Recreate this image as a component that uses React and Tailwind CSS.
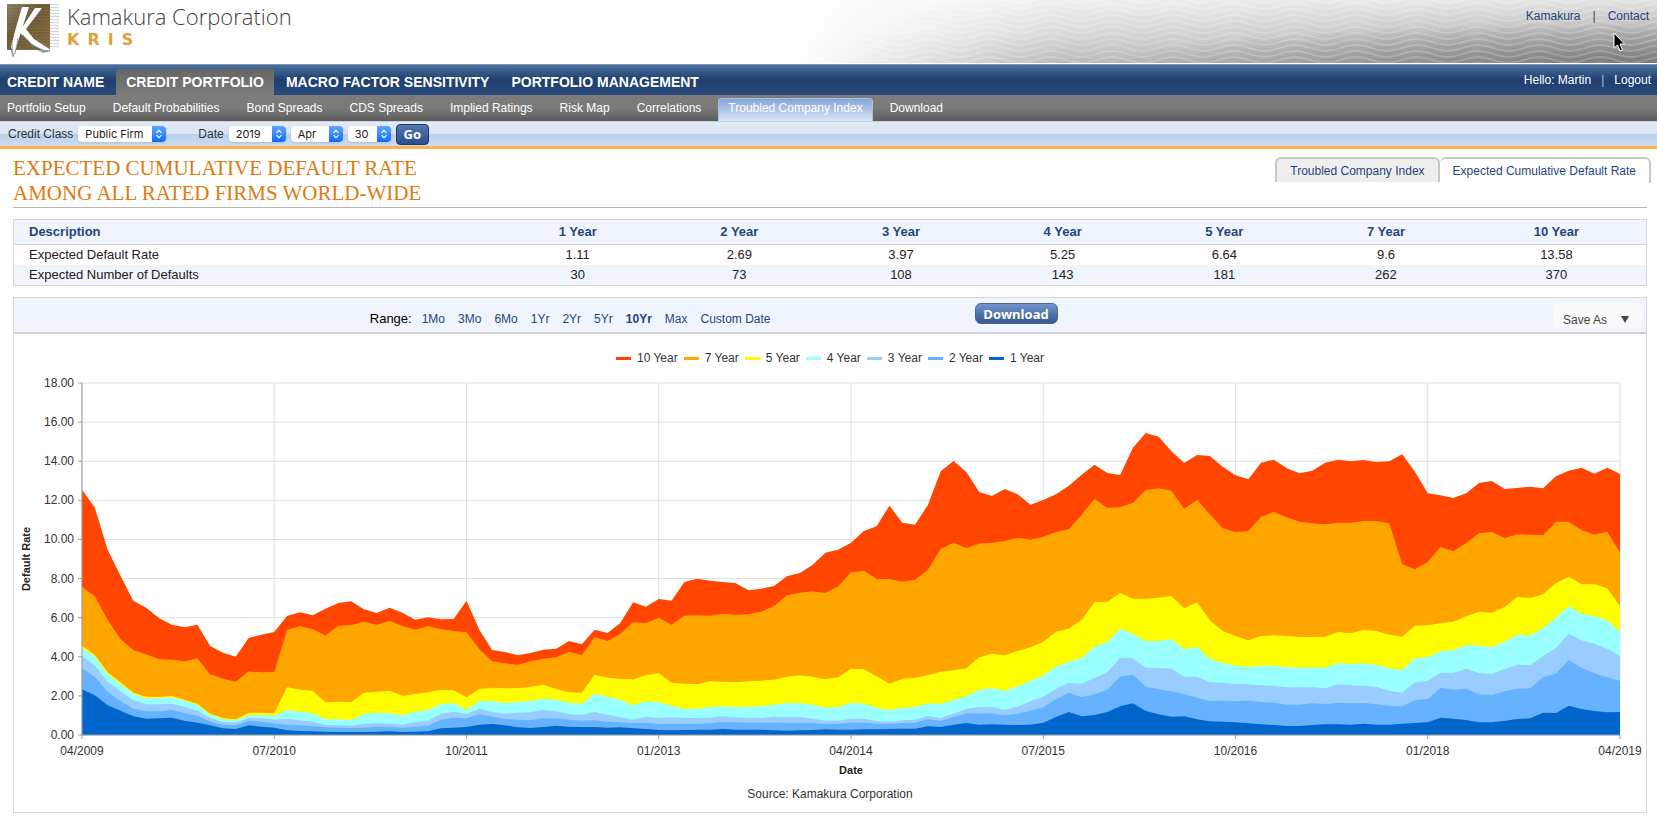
import { useState } from "react";

// Monthly readings from 04/2009 to 04/2019, in chart units:
// 40 is the top of the axis (18.00) and 1096 is the bottom (0.00)
const CHART_TOP = 40;
const CHART_BOTTOM = 1096;

const series = [
    {
        name: "10 Year", color: "#ff4500", swatch: "bg-[#ff4500]",
        points: [
            360,414,540,618,693,714,745,765,773,765,829,849,861,805,795,787,739,728,737,717,700,695,719,730,714,729,750,
            743,749,748,693,780,841,847,857,850,840,837,814,824,780,790,760,698,711,688,693,637,627,633,637,641,662,657,649,620,610,586,
            549,540,519,484,470,408,459,465,406,305,274,307,367,379,358,374,405,391,374,348,315,285,310,316,234,190,201,245,280,256,259,291,
            317,329,279,270,296,311,303,279,270,275,271,277,275,254,306,371,377,385,371,340,334,358,355,351,356,320,303,294,312,294,313,
        ],
    },
    {
        name: "7 Year", color: "#ffa500", swatch: "bg-[#ffa500]",
        points: [
            651,680,750,808,841,854,868,870,875,866,914,927,936,905,908,907,781,769,779,797,768,766,756,765,753,769,780,
            769,779,784,788,838,875,881,885,875,867,863,846,856,803,814,793,758,760,744,765,738,737,738,732,735,734,726,709,677,669,665,
            670,650,608,603,628,628,636,630,600,537,519,535,522,519,514,504,510,501,487,478,435,387,414,413,399,361,356,363,417,390,434,476,
            487,484,441,427,443,456,461,464,459,459,454,454,461,583,599,576,532,545,520,491,487,505,494,495,497,456,456,481,495,486,548,
        ],
    },
    {
        name: "5 Year", color: "#ffff00", swatch: "bg-[#ffff00]",
        points: [
            828,856,908,938,969,981,982,979,990,1002,1032,1045,1049,1030,1029,1031,953,960,963,998,996,998,969,966,963,978,973,
            968,960,962,983,958,954,956,956,951,945,958,968,969,915,924,928,929,916,911,939,942,944,935,936,938,935,933,930,921,917,921,
            929,923,897,899,920,942,927,925,917,906,902,896,863,852,857,844,833,816,786,777,750,698,696,670,687,687,684,679,716,698,752,784,
            799,812,799,797,799,802,802,801,787,791,781,784,795,801,768,767,761,756,740,726,729,712,682,685,674,641,621,644,644,656,710,
        ],
    },
    {
        name: "4 Year", color: "#99ffff", swatch: "bg-[#99ffff]",
        points: [
            835,860,914,943,973,986,986,983,993,1006,1036,1048,1052,1036,1036,1038,1021,1026,1031,1049,1049,1051,1033,1029,1031,1037,1026,
            1021,1003,1000,1020,995,995,1000,996,994,987,990,999,1002,972,981,990,1007,995,998,1008,1018,1017,1013,1010,1012,1011,1009,1005,1000,1000,1005,
            1014,1012,999,1002,1014,1022,1014,1011,1001,1002,991,979,960,955,963,950,934,917,890,876,865,831,817,777,794,814,814,809,839,832,868,880,
            888,892,888,888,893,894,893,894,880,883,881,885,896,901,866,862,845,841,826,828,832,816,795,797,775,744,709,732,739,752,788,
        ],
    },
    {
        name: "3 Year", color: "#99ccff", swatch: "bg-[#99ccff]",
        points: [
            860,887,937,965,992,1004,1004,1002,1012,1023,1045,1057,1059,1045,1046,1050,1048,1052,1056,1066,1066,1068,1063,1060,1062,1065,1057,
            1053,1032,1026,1034,1018,1027,1032,1029,1028,1020,1025,1033,1036,1027,1035,1043,1050,1041,1045,1043,1045,1045,1044,1040,1043,1046,1045,1041,1042,1042,1047,
            1053,1053,1047,1047,1054,1057,1052,1050,1039,1045,1032,1018,1011,1012,1020,1011,995,981,957,940,942,925,908,864,866,894,895,897,921,921,938,939,
            943,944,947,949,953,953,953,956,944,947,949,952,963,969,938,934,909,910,897,910,913,898,885,887,859,835,792,812,822,837,860,
        ],
    },
    {
        name: "2 Year", color: "#66b2ff", swatch: "bg-[#66b2ff]",
        points: [
            896,922,966,994,1017,1025,1025,1021,1031,1038,1055,1066,1067,1053,1056,1062,1065,1067,1070,1073,1074,1075,1074,1071,1072,1074,1071,
            1069,1050,1044,1046,1034,1041,1047,1050,1051,1046,1046,1050,1053,1052,1056,1058,1060,1060,1063,1062,1062,1062,1061,1056,1058,1060,1059,1059,1060,1060,1060,
            1063,1062,1059,1059,1062,1063,1060,1059,1049,1054,1042,1031,1032,1031,1037,1032,1023,1013,989,969,983,974,960,921,915,951,959,965,974,984,995,993,
            995,993,997,999,1005,1005,1001,1003,999,1001,1000,1004,1009,1010,992,988,954,960,957,974,976,965,957,956,922,912,871,895,911,923,934,
        ],
    },
    {
        name: "1 Year", color: "#0066cc", swatch: "bg-[#0066cc]",
        points: [
            959,977,1007,1023,1040,1047,1046,1044,1053,1059,1067,1076,1078,1067,1071,1074,1082,1084,1085,1086,1087,1087,1087,1086,1085,1087,1086,
            1085,1076,1074,1072,1065,1063,1067,1073,1075,1072,1068,1071,1072,1072,1074,1073,1076,1078,1081,1082,1081,1080,1080,1078,1080,1080,1080,1082,1083,1082,1081,
            1079,1080,1080,1079,1079,1078,1077,1077,1070,1072,1065,1060,1065,1064,1065,1066,1065,1059,1042,1027,1040,1036,1027,1010,1001,1024,1034,1041,1040,1049,1055,1056,
            1058,1061,1064,1066,1069,1069,1066,1064,1064,1065,1062,1065,1065,1062,1060,1058,1044,1047,1051,1058,1058,1053,1048,1046,1029,1030,1008,1018,1024,1028,1027,
        ],
    },
];

const yLabels = ["18.00", "16.00", "14.00", "12.00", "10.00", "8.00", "6.00", "4.00", "2.00", "0.00"];
const xLabels = ["04/2009", "07/2010", "10/2011", "01/2013", "04/2014", "07/2015", "10/2016", "01/2018", "04/2019"];

const rates = [
    ["1 Year", "1.11", "30"],
    ["2 Year", "2.69", "73"],
    ["3 Year", "3.97", "108"],
    ["4 Year", "5.25", "143"],
    ["5 Year", "6.64", "181"],
    ["7 Year", "9.6", "262"],
    ["10 Year", "13.58", "370"],
];

const ranges = ["1Mo", "3Mo", "6Mo", "1Yr", "2Yr", "5Yr", "10Yr", "Max", "Custom Date"];
const mainNav = ["CREDIT NAME", "CREDIT PORTFOLIO", "MACRO FACTOR SENSITIVITY", "PORTFOLIO MANAGEMENT"];
const subNav = ["Portfolio Setup", "Default Probabilities", "Bond Spreads", "CDS Spreads", "Implied Ratings", "Risk Map", "Correlations", "Troubled Company Index", "Download"];

const Logo = () => (
    <svg width="54" height="58" viewBox="0 0 54 58" aria-hidden="true">
        <defs>
            <linearGradient id="logoFill" x1="0" y1="0" x2="1" y2="1">
                <stop offset="0" stopColor="#857b5e" />
                <stop offset="0.4" stopColor="#6b5631" />
                <stop offset="1" stopColor="#86683a" />
            </linearGradient>
            <pattern id="logoMesh" width="4" height="3" patternUnits="userSpaceOnUse">
                <path d="M0 1.500Q1 .5 2 1.500T4 1.500" fill="none" stroke="#a9b4b8" strokeWidth="0.700" />
            </pattern>
        </defs>
        <rect x="40" y="4" width="13" height="44" fill="url(#logoMesh)" />
        <rect x="1" y="4" width="43" height="46" fill="url(#logoFill)" />
        <rect x="1" y="4" width="43" height="46" fill="url(#logoMesh)" opacity="0.250" />
        <path d="M12 30 4 48 7 58 16 36 27 47 37 53 45 51Z" fill="#4d5a5c" opacity="0.600" />
        <path d="M16 7 23 7 15 32 8 55 5 47 9 31Z" fill="#fff" />
        <path d="M29 8 36 8 20 29 28 39 45 50 36 50 26 44 13 32Z" fill="#fff" />
        <path d="M17 35 26 45 42 52M12 38 9 54M6 42 7 57" fill="none" stroke="#8d9a9c" strokeWidth="0.800" />
    </svg>
);

const Waves = () => (
    <svg className="absolute inset-0 h-full w-full" aria-hidden="true">
        <defs>
            <pattern id="waves" width="61" height="6" patternUnits="userSpaceOnUse" patternTransform="translate(12 0)">
                <path d="M0 -3C12 -3 18 3 30.500 3S49 -3 61 -3M0 3C12 3 18 9 30.500 9S49 3 61 3M0 -9C12 -9 18 -3 30.500 -3S49 -9 61 -9" fill="none" stroke="#fff" strokeOpacity="0.200" strokeWidth="1.800" />
            </pattern>
        </defs>
        <rect width="100%" height="100%" fill="url(#waves)" />
    </svg>
);

const PickList = ({ id, label, options, width }) => (
    <span className={`relative flex h-4 rounded-sm bg-white shadow-sm ${width}`}>
        <select id={id} aria-label={label} className="w-full appearance-none bg-transparent pl-[7px] font-[Inter,sans-serif] text-[11px] leading-4 text-[#222]">
            {options.map((option) => (
                <option key={option}>{option}</option>
            ))}
        </select>
        <span className="pointer-events-none absolute inset-y-0 right-0 flex w-[14px] items-center justify-center rounded-r-sm bg-linear-to-b from-[#5ea5fb] to-[#0a6afc]">
            <svg width="8" height="10" viewBox="0 0 8 10" fill="none" stroke="#fff" strokeWidth="1.200">
                <path d="M1.500 3.800 4 1.300 6.500 3.800M1.500 6.200 4 8.700 6.500 6.200" />
            </svg>
        </span>
    </span>
);

const Chart = () => {
    const toArea = (points) => `0,${CHART_BOTTOM} ${points.map((y, i) => `${i},${y}`).join(" ")} 120,${CHART_BOTTOM}`;

    return (
        <div className="px-2 pt-4 pb-[10px] text-xs leading-4 text-[#333]">
            <ul className="flex justify-center gap-[6px]">
                {series.map((item) => (
                    <li key={item.name} className="flex items-center gap-[6px]">
                        <span className={`h-[3px] w-[15px] ${item.swatch}`}></span>
                        {item.name}
                    </li>
                ))}
            </ul>

            <div className="mt-[17px] flex pr-[18px]">
                <div className="flex w-2 items-center justify-center">
                    <span className="-rotate-90 text-[11px] font-bold whitespace-nowrap text-[#222]">Default Rate</span>
                </div>
                <div className="flex w-11 flex-col justify-between text-right">
                    {yLabels.map((label) => (
                        <span key={label} className="flex h-0 items-center justify-end">{label}</span>
                    ))}
                </div>
                <div className="ml-2 h-[352px] min-w-0 flex-1">
                    <svg className="h-full w-full overflow-visible" viewBox={`0 ${CHART_TOP} 120 ${CHART_BOTTOM - CHART_TOP}`} preserveAspectRatio="none" role="img" aria-label="Expected cumulative default rate">
                        <g stroke="#dfdfdf" strokeWidth="1">
                            {yLabels.map((label, i) => {
                                const y = CHART_TOP + (i * (CHART_BOTTOM - CHART_TOP)) / 9;
                                return <line key={label} x1="0" x2="120" y1={y} y2={y} vectorEffect="non-scaling-stroke" />;
                            })}
                            {xLabels.map((label, i) => (
                                <line key={label} x1={i * 15} x2={i * 15} y1={CHART_TOP} y2={CHART_BOTTOM} vectorEffect="non-scaling-stroke" />
                            ))}
                        </g>
                        {series.map((item) => (
                            <polygon key={item.name} points={toArea(item.points)} fill={item.color} />
                        ))}
                        <g stroke="#999" strokeWidth="1">
                            <line x1="0" x2="0" y1={CHART_TOP} y2={CHART_BOTTOM} vectorEffect="non-scaling-stroke" />
                            <line x1="0" x2="120" y1={CHART_BOTTOM} y2={CHART_BOTTOM} vectorEffect="non-scaling-stroke" />
                            {yLabels.map((label, i) => {
                                const y = CHART_TOP + (i * (CHART_BOTTOM - CHART_TOP)) / 9;
                                return <line key={label} x1="-0.300" x2="0" y1={y} y2={y} vectorEffect="non-scaling-stroke" />;
                            })}
                            {xLabels.map((label, i) => (
                                <line key={label} x1={i * 15} x2={i * 15} y1={CHART_BOTTOM} y2={CHART_BOTTOM + 12} vectorEffect="non-scaling-stroke" />
                            ))}
                        </g>
                    </svg>
                </div>
            </div>

            <div className="mt-2 mr-[18px] ml-[60px] flex justify-between">
                {xLabels.map((label) => (
                    <span key={label} className="flex w-0 justify-center">{label}</span>
                ))}
            </div>
            <p className="mt-[3px] ml-[42px] text-center text-[11px] font-bold text-[#222]">Date</p>
            <p className="mt-2 text-center">Source: Kamakura Corporation</p>
        </div>
    );
};

const App = () => {
    const [range, setRange] = useState("10Yr");

    return (
        <div className="bg-white font-['Liberation_Sans',Arial,sans-serif] text-xs leading-4 text-[#222]">
            <header className="relative flex h-16 justify-between border-b border-white">
                <div className="absolute inset-y-0 right-0 w-[52%] bg-linear-to-r from-[#e8e8e8] via-[#d2d2d2] to-[#b8b8b8] mask-[linear-gradient(to_right,transparent,black_30%)]">
                    <div className="absolute inset-0 bg-linear-to-b from-white/60 via-transparent to-[#8a8a8a]/40"></div>
                    <div className="absolute inset-0 bg-[radial-gradient(ellipse_at_bottom_right,#606060a0,transparent_45%)]"></div>
                    <Waves />
                </div>
                <a href="#home" className="relative flex gap-[7px] pl-[6px]">
                    <Logo />
                    <span className="flex flex-col">
                        <span className="font-['Open_Sans',sans-serif] text-[22px] leading-8 font-light text-[#444]">Kamakura Corporation</span>
                        <span className="font-['DejaVu_Sans',sans-serif] text-base leading-4 font-bold tracking-[8px] text-[#dfa236]">KRIS</span>
                    </span>
                </a>
                <div className="relative flex items-start gap-3 pt-2 pr-2 text-[#25467c]">
                    <a href="#kamakura">Kamakura</a>
                    <span>|</span>
                    <a href="#contact">Contact</a>
                    <svg className="absolute top-8 right-8 h-5 w-3" viewBox="0 0 12 20" aria-hidden="true">
                        <path d="M1 1V16L4.500 13 7 19 9.500 18 7 12H11.500Z" fill="#000" stroke="#fff" />
                    </svg>
                </div>
            </header>

            <nav className="flex h-[31px] items-end justify-between border-t border-[#7d96b8] bg-linear-to-b from-[#4a729f] via-[#1f3f6e] to-[#28497a] text-white">
                <ul className="flex text-sm font-bold">
                    {mainNav.map((item) => (
                        <li key={item} className="first:-ml-1">
                            <a href="#section" className={item === "CREDIT PORTFOLIO" ? "mx-px flex h-[26px] items-center rounded-t bg-linear-to-b from-[#666] to-[#7c7c7c] px-[10px]" : "flex h-[26px] items-center px-[11px]"}>{item}</a>
                        </li>
                    ))}
                </ul>
                <div className="flex h-full items-center gap-[10px] pr-[6px]">
                    <span>Hello: Martin</span>
                    <span className="text-[#b7c4d8]">|</span>
                    <a href="#logout">Logout</a>
                </div>
            </nav>

            <nav className="h-[26px] bg-linear-to-b from-[#7c7c7c] via-[#7a7a7a] to-[#5c5c5c] px-[7px] text-white">
                <ul className="flex h-full items-end gap-[27px]">
                    {subNav.map((item) => (
                        <li key={item}>
                            <a href="#page" className={item === "Troubled Company Index" ? "-mx-[10px] flex h-[23px] items-center rounded-t border-x border-t border-[#a9bfe2] bg-linear-to-b from-[#84a4d8] to-[#dbe6f5] px-[9px] pb-1" : "flex h-[23px] items-center pb-[3px]"}>{item}</a>
                        </li>
                    ))}
                </ul>
            </nav>

            <form className="flex h-7 items-center gap-[5px] border-t border-b-3 border-t-[#c9cfdb] border-b-[#fdb54a] bg-[linear-gradient(to_bottom,#e2ebf7,#d6e3f2_50%,#b9d0eb_50%,#cdddf1)] pl-2 text-[#333]" onSubmit={(e) => e.preventDefault()}>
                <label htmlFor="credit-class">Credit Class</label>
                <PickList id="credit-class" width="w-[88px]" options={["Public Firm"]} />
                <label htmlFor="year" className="ml-[27px]">Date</label>
                <PickList id="year" width="w-[57px]" options={["2019"]} />
                <PickList id="month" label="Month" width="w-[52px]" options={["Apr"]} />
                <PickList id="day" label="Day" width="w-[43px]" options={["30"]} />
                <button type="submit" className="h-[21px] w-[33px] rounded border border-[#1d3a6b] bg-linear-to-b from-[#5578b0] to-[#2c4f8c] font-['Open_Sans',sans-serif] text-[13px] leading-4 font-bold text-white">Go</button>
            </form>

            <main className="px-[10px] pb-[9px] pl-[13px]">
                <div className="flex justify-between border-b border-[#b5b5b5] pb-px">
                    <h1 className="pt-[7px] font-['Liberation_Serif',Georgia,serif] text-[21px] leading-[25px] text-[#dd7a10] uppercase">
                        Expected Cumulative Default Rate<br />Among All Rated Firms World-Wide
                    </h1>
                    <div className="-mr-1 flex items-start pt-2 text-[#25467c]">
                        <a href="#tci" className="flex h-[25px] items-center rounded-t-md border-2 border-b-0 border-[#c6c6c6] bg-[#eee] px-[13px]">Troubled Company Index</a>
                        <a href="#ecdr" className="flex h-[26px] items-center rounded-t-md border-2 border-b-0 border-l-0 border-[#c6c6c6] bg-white px-[13px]">Expected Cumulative Default Rate</a>
                    </div>
                </div>

                <table className="mt-[11px] w-full table-fixed border border-[#d6d6d6] text-center text-[13px] leading-5">
                    <colgroup>
                        <col className="w-[29.6%]" />
                        <col span="6" className="w-[9.9%]" />
                        <col />
                    </colgroup>
                    <thead>
                        <tr className="h-[25px] border-b border-[#d6d6d6] bg-[#f0f4fc] text-[#25467c]">
                            <th className="pl-[15px] text-left">Description</th>
                            {rates.map(([year]) => (
                                <th key={year}>{year}</th>
                            ))}
                        </tr>
                    </thead>
                    <tbody>
                        <tr>
                            <td className="pl-[15px] text-left">Expected Default Rate</td>
                            {rates.map(([year, rate]) => (
                                <td key={year}>{rate}</td>
                            ))}
                        </tr>
                        <tr className="bg-[#f0f4fc]">
                            <td className="pl-[15px] text-left">Expected Number of Defaults</td>
                            {rates.map(([year, , count]) => (
                                <td key={year}>{count}</td>
                            ))}
                        </tr>
                    </tbody>
                </table>

                <section className="mt-[11px] border border-[#d6d6d6]">
                    <div className="flex h-9 items-start border-b-2 border-[#d0d0d0] bg-[#f0f4fc] pt-[5px] pr-1">
                        <div className="flex w-[59%] justify-end">
                            <div className="mr-[204px] flex gap-[13px] pt-2 text-[#25467c]">
                                <span className="-mr-[3px] text-[13px] text-black">Range:</span>
                                {ranges.map((item) => (
                                    <button key={item} type="button" onClick={() => setRange(item)} className={item === range ? "font-bold" : ""}>{item}</button>
                                ))}
                            </div>
                        </div>
                        <button type="button" className="h-[21px] w-[83px] rounded-md border border-[#46659c] bg-linear-to-b from-[#7194cf] to-[#36588f] font-['Open_Sans',sans-serif] text-[13px] leading-4 font-bold text-white">Download</button>
                        <button type="button" className="ml-auto flex h-[25px] items-center gap-[14px] rounded-sm bg-[#fafafa] pt-2 pr-[13px] pl-[10px] text-[#444]">
                            Save As
                            <svg width="8" height="7" viewBox="0 0 8 7" aria-hidden="true">
                                <path d="M0 0H8L4 7Z" fill="#444" />
                            </svg>
                        </button>
                    </div>
                    <Chart />
                </section>
            </main>
        </div>
    );
};

export default App;
